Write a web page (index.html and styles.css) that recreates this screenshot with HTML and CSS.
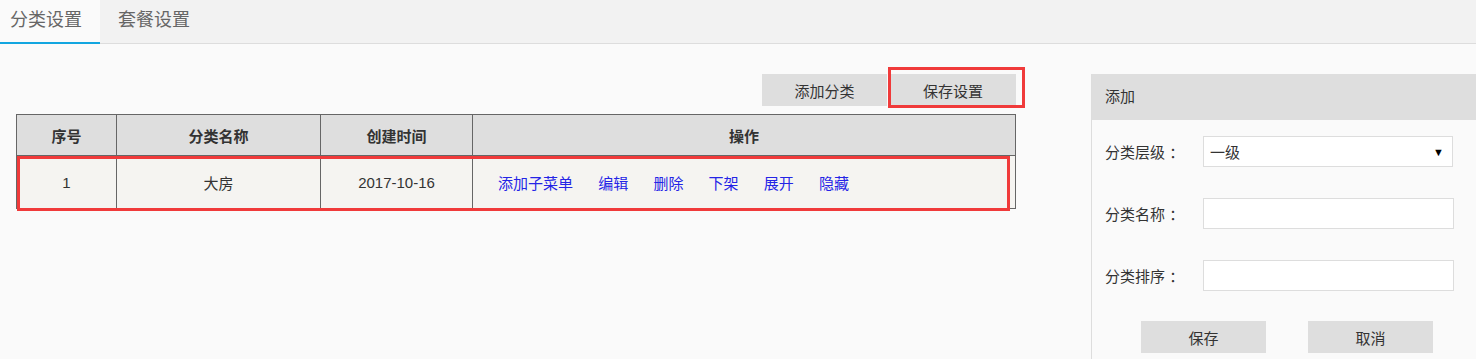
FILE: index.html
```html
<!DOCTYPE html>
<html lang="zh-CN">
<head>
  <meta charset="UTF-8" />
  <title>分类设置</title>
  <link rel="stylesheet" href="styles.css">
</head>
<body>

  <div class="tabs">
    <a class="tab active">分类设置</a>
    <a class="tab">套餐设置</a>
  </div>

  <div class="main">
    <div class="left">
      <div class="toolbar">
        <button class="btn">添加分类</button>
        <span class="marked">
          <button class="btn">保存设置</button>
          <span class="mark mark-btn"></span>
        </span>
      </div>

      <div class="table-wrap">
        <table class="list">
          <thead>
            <tr>
              <th class="c1">序号</th>
              <th class="c2">分类名称</th>
              <th class="c3">创建时间</th>
              <th>操作</th>
            </tr>
          </thead>
          <tbody>
            <tr>
              <td>1</td>
              <td>大房</td>
              <td>2017-10-16</td>
              <td class="ops">
                <a>添加子菜单</a>
                <a>编辑</a>
                <a>删除</a>
                <a>下架</a>
                <a>展开</a>
                <a>隐藏</a>
              </td>
            </tr>
          </tbody>
        </table>
        <span class="mark mark-row"></span>
      </div>
    </div>

    <div class="panel">
      <div class="panel-head">添加</div>
      <div class="panel-body">
        <div class="form-row">
          <label>分类层级 ：</label>
          <div class="select">
            <span>一级</span>
            <span class="arrow">&#9660;</span>
          </div>
        </div>
        <div class="form-row">
          <label>分类名称 ：</label>
          <input class="field" type="text" />
        </div>
        <div class="form-row">
          <label>分类排序 ：</label>
          <input class="field" type="text" />
        </div>
        <div class="form-actions">
          <button class="btn">保存</button>
          <button class="btn">取消</button>
        </div>
      </div>
    </div>
  </div>

</body>
</html>
```

FILE: styles.css
```css
* {
  box-sizing: border-box;
}

body {
  margin: 0;
  background: #fafafa;
  font-family: 'Liberation Sans', 'Noto Sans CJK SC', sans-serif;
  font-size: 15px;
  color: #333;
}

/* Tabs */
.tabs {
  display: flex;
  height: 44px;
  background: #f2f2f2;
  border-bottom: 1px solid #ddd;
}

.tab {
  padding: 0 18px;
  line-height: 40px;
  font-size: 18px;
  color: #666;
  cursor: pointer;
}

.tab.active {
  padding-left: 10px;
  background: #fafafa;
  border-bottom: 2px solid #12a6e0;
  margin-bottom: -1px;
}

/* Layout */
.main {
  display: flex;
  padding-top: 30px;
}

.left {
  width: 1016px;
  padding-left: 16px;
}

.toolbar {
  display: flex;
  justify-content: flex-end;
  gap: 3px;
}

.btn {
  width: 125px;
  height: 32px;
  border: none;
  background: #dedede;
  font-family: inherit;
  font-size: 15px;
  color: #333;
  cursor: pointer;
}

.toolbar .marked .btn {
  width: 126px;
}

.marked {
  position: relative;
  display: block;
}

/* red annotation frames */
.mark {
  position: absolute;
  border: 3px solid #f03a3a;
  pointer-events: none;
}

.mark-btn {
  left: -2px;
  top: -7px;
  width: 137px;
  height: 41px;
}

.table-wrap {
  position: relative;
  margin-top: 8px;
}

.mark-row {
  left: 1px;
  top: 42px;
  width: 993px;
  height: 55px;
}

/* Table */
.list {
  width: 1000px;
  border-collapse: collapse;
  table-layout: fixed;
}

.list th,
.list td {
  border: 1px solid #666;
  text-align: center;
  padding: 0;
}

.list th {
  height: 41px;
  background: #dedede;
  font-weight: bold;
  color: #333;
}

.list td {
  height: 53px;
  background: #f5f4f1;
}

.list .c1 { width: 100px; }
.list .c2 { width: 204px; }
.list .c3 { width: 152px; }

.list td.ops {
  text-align: left;
  padding-left: 25px;
}

.ops a {
  color: #2424e6;
  margin-right: 21px;
  cursor: pointer;
}

/* Right panel */
.panel {
  margin-left: 75px;
  flex: 1;
  border-left: 1px solid #ddd;
  min-height: 285px;
}

.panel-head {
  height: 46px;
  line-height: 46px;
  padding-left: 13px;
  background: #dedede;
}

.panel-body {
  padding: 16px 0 0 13px;
}

.form-row {
  display: flex;
  align-items: center;
  height: 31px;
  margin-bottom: 31px;
}

.form-row label {
  width: 98px;
  white-space: nowrap;
}

.select {
  display: flex;
  justify-content: space-between;
  align-items: center;
  width: 250px;
  height: 31px;
  padding: 0 8px 0 6px;
  background: #fff;
  border: 1px solid #ddd;
}

.select .arrow {
  font-size: 11px;
  color: #000;
}

.field {
  width: 251px;
  height: 31px;
  border: 1px solid #ddd;
  background: #fff;
  outline: none;
}

.form-actions {
  display: flex;
  gap: 42px;
  padding-left: 36px;
  margin-top: -1px;
}
```
